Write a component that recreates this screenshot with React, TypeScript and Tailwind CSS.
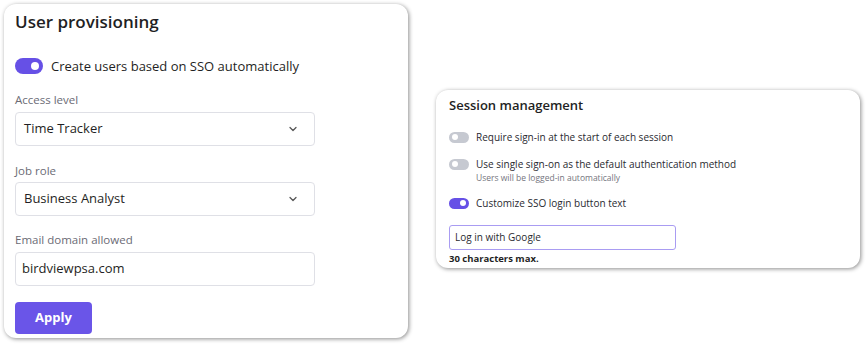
import { ChevronDown } from 'lucide-react';

function Toggle({ on, small }: { on: boolean; small?: boolean }) {
  if (small) {
    return (
      <span
        className={`relative inline-block h-[11px] w-[20px] shrink-0 rounded-full ${on ? 'bg-[#6650e6]' : 'bg-[#c6c9d1]'}`}
      >
        <span
          className={`absolute top-[2.5px] h-[6px] w-[6px] rounded-full bg-white ${on ? 'right-[3px]' : 'left-[3px]'}`}
        />
      </span>
    );
  }
  return (
    <span
      className={`relative inline-block h-[16px] w-[28px] shrink-0 rounded-full ${on ? 'bg-[#6650e6]' : 'bg-[#c6c9d1]'}`}
    >
      <span
        className={`absolute top-[4px] h-[8px] w-[8px] rounded-full bg-white ${on ? 'right-[4px]' : 'left-[4px]'}`}
      />
    </span>
  );
}

function Select({ value }: { value: string }) {
  return (
    <div className="flex h-[34px] w-[300px] items-center justify-between rounded-[4px] border border-[#dfe0e6] bg-white pl-[8px] pr-[15px]">
      <span className="text-[13px] text-[#1f1f24]">{value}</span>
      <ChevronDown className="h-[12px] w-[12px] text-[#555]" strokeWidth={2.5} />
    </div>
  );
}

export default function App() {
  return (
    <div
      className="flex h-[344px] w-[866px] items-start bg-white pl-[4px] pt-[4px]"
      style={{ fontFamily: '"Open Sans", "Noto Sans", sans-serif' }}
    >
      {/* User provisioning */}
      <div className="flex h-[334px] w-[404px] flex-col rounded-[12px] bg-white pl-[11px] pt-[6px] shadow-[1px_1px_4px_rgba(0,0,0,0.45)]">
        <h2 className="text-[17px] font-semibold leading-[24px] text-[#1f1f24]">User provisioning</h2>

        <div className="mt-[23px] flex items-center gap-[8px] leading-[18px]">
          <Toggle on />
          <span className="text-[13px] text-[#1f1f24]">Create users based on SSO automatically</span>
        </div>

        <div className="mt-[17px] text-[11.5px] leading-[16px] text-[#6b6b75]">Access level</div>
        <div className="mt-[4px]">
          <Select value="Time Tracker" />
        </div>

        <div className="mt-[17px] text-[11.5px] leading-[16px] text-[#6b6b75]">Job role</div>
        <div className="mt-[3px]">
          <Select value="Business Analyst" />
        </div>

        <div className="mt-[16px] text-[11.5px] leading-[16px] text-[#6b6b75]">Email domain allowed</div>
        <div className="mt-[4px] flex h-[34px] w-[300px] items-center rounded-[4px] border border-[#dfe0e6] bg-white pl-[6px]">
          <span className="text-[13px] text-[#1f1f24]">birdviewpsa.com</span>
        </div>

        <button className="mt-[16px] flex h-[32px] w-[77px] items-center justify-center rounded-[4px] bg-[#6a55e8] text-[13px] font-bold text-white">
          Apply
        </button>
      </div>

      {/* Session management */}
      <div className="ml-[28px] mt-[86px] flex h-[178px] w-[424px] flex-col rounded-[12px] bg-white pl-[13px] pt-[5px] shadow-[1px_1px_4px_rgba(0,0,0,0.45)]">
        <h3 className="text-[13px] font-semibold leading-[20px] text-[#1f1f24]">Session management</h3>

        <div className="mt-[15px] flex h-[14px] items-center gap-[7px]">
          <Toggle on={false} small />
          <span className="text-[10px] leading-[14px] text-[#2a2a30]">Require sign-in at the start of each session</span>
        </div>

        <div className="mt-[13px] flex h-[14px] items-center gap-[7px]">
          <Toggle on={false} small />
          <span className="text-[10px] leading-[14px] text-[#2a2a30]">Use single sign-on as the default authentication method</span>
        </div>
        <div className="mt-[1px] pl-[27px] text-[8.5px] leading-[12px] text-[#75757e]">Users will be logged-in automatically</div>

        <div className="mt-[12px] flex h-[14px] items-center gap-[7px]">
          <Toggle on small />
          <span className="text-[10px] leading-[14px] text-[#2a2a30]">Customize SSO login button text</span>
        </div>

        <div className="mt-[15px] flex h-[25px] w-[227px] items-center rounded-[3px] border border-[#a99cf2] pl-[5px]">
          <span className="text-[10px] text-[#2a2a30]">Log in with Google</span>
        </div>
        <div className="mt-[3px] text-[9.5px] font-bold leading-[12px] text-[#1f1f24]">30 characters max.</div>
      </div>
    </div>
  );
}
